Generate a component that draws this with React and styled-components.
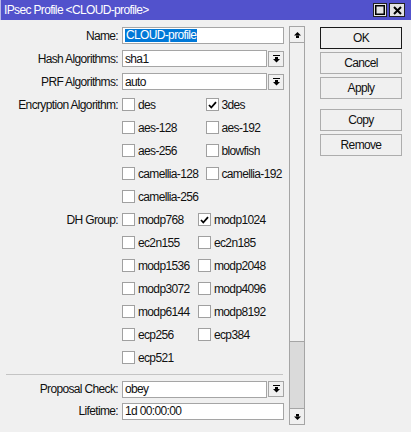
import React from 'react';
import styled, { createGlobalStyle } from 'styled-components';

const GlobalStyle = createGlobalStyle`
    html, body {
        margin: 0;
        padding: 0;
        background: #f0f0f0;
    }

    body {
        font-family: 'Liberation Sans', Arial, sans-serif;
        font-size: 12px;
        letter-spacing: -0.65px;
        color: #111;
    }
`;

const Window = styled.div`
    width: 411px;
    height: 432px;
    background: #f0f0f0;
    display: flex;
    flex-direction: column;
    overflow: hidden;
`;

const TitleBar = styled.div`
    height: 20px;
    background: #5252cc;
    color: #fff;
    display: flex;
    align-items: center;
    justify-content: space-between;
    padding: 0 6px 0 3px;
    border-left: 1px solid #b8b8e8;
    box-sizing: border-box;
`;

const TitleButtons = styled.div`
    display: flex;
    gap: 2px;
`;

const TitleButton = styled.div`
    width: ${p => p.$w || 14}px;
    height: 14px;
    box-sizing: border-box;
    background: #e4e4e4;
    border: 1px solid #222;
    display: flex;
    align-items: center;
    justify-content: center;
`;

const Body = styled.div`
    flex: 1;
    display: flex;
    padding-top: 4px;
`;

const Form = styled.div`
    width: 289px;
    display: flex;
    flex-direction: column;
`;

const Row = styled.div`
    height: ${p => p.$h || 23}px;
    display: flex;
    align-items: center;
`;

const Label = styled.div`
    width: 118px;
    text-align: right;
    padding-right: 4px;
    flex-shrink: 0;
    white-space: nowrap;
`;

const Input = styled.div`
    width: ${p => p.$w}px;
    height: 17px;
    box-sizing: border-box;
    background: #fff;
    border: 1px solid #a5a5a5;
    padding-left: 2px;
    display: flex;
    align-items: center;
    white-space: nowrap;
`;

const Selected = styled.span`
    background: #0078d7;
    color: #fff;
    padding: 0 1px;
    line-height: 13px;
`;

const DropButton = styled.div`
    width: 16px;
    height: 16px;
    margin-left: 1px;
    box-sizing: border-box;
    border: 1px solid #a5a5a5;
    background: #f0f0f0;
    display: flex;
    align-items: center;
    justify-content: center;
`;

const Group = styled.div`
    display: flex;
    flex-direction: column;
`;

const CheckRow = styled.div`
    height: 23px;
    display: flex;
    align-items: center;
`;

const CheckCell = styled.div`
    width: ${p => p.$w}px;
    display: flex;
    align-items: center;
    white-space: nowrap;
`;

const Box = styled.div`
    width: 13px;
    height: 13px;
    box-sizing: border-box;
    background: #fff;
    border: 1px solid #a0a0a0;
    margin-right: 3px;
    display: flex;
    align-items: center;
    justify-content: center;
    flex-shrink: 0;
`;

const Separator = styled.div`
    height: 1px;
    background: #c4c4c4;
    margin: 5px 6px 3px 6px;
`;

const ScrollBar = styled.div`
    width: 16px;
    height: 399px;
    margin-top: 2px;
    box-sizing: border-box;
    display: flex;
    flex-direction: column;
    border: 1px solid #a5a5a5;
    background: #dadada;
`;

const ScrollButton = styled.div`
    height: 15px;
    flex-shrink: 0;
    background: #f0f0f0;
    display: flex;
    align-items: center;
    justify-content: center;
    border-${p => p.$side}: 1px solid #a5a5a5;
`;

const Thumb = styled.div`
    height: 298px;
    background: #f0f0f0;
    border-bottom: 1px solid #a5a5a5;
    flex-shrink: 0;
`;

const Track = styled.div`
    flex: 1;
`;

const Actions = styled.div`
    margin: 3px 0 0 15px;
    width: 82px;
    display: flex;
    flex-direction: column;
    gap: 3px;
`;

const Button = styled.div`
    height: 22px;
    box-sizing: border-box;
    border: 1px solid ${p => (p.$default ? '#1a1a1a' : '#adadad')};
    background: #f0f0f0;
    display: flex;
    align-items: center;
    justify-content: center;
    margin-top: ${p => p.$gap || 0}px;
`;

const DropIcon = () => (
    <svg width="7" height="8" viewBox="0 0 7 8">
        <rect x="0" y="0" width="7" height="1" fill="#000" />
        <rect x="2" y="2" width="3" height="2" fill="#000" />
        <polygon points="0,4 7,4 3.5,7.5" fill="#000" />
    </svg>
);

const Arrow = ({ up }) => (
    <svg width="7" height="6" viewBox="0 0 7 6" style={{ transform: up ? 'none' : 'rotate(180deg)' }}>
        <polygon points="3.5,0 7,3.5 0,3.5" fill="#000" />
        <rect x="2" y="3.5" width="3" height="2.5" fill="#000" />
    </svg>
);

const Check = () => (
    <svg width="9" height="8" viewBox="0 0 9 8">
        <path d="M1 4 L3.3 6.5 L8 1.2" stroke="#000" strokeWidth="1.8" fill="none" />
    </svg>
);

const encryption = [
    [['des', false], ['3des', true]],
    [['aes-128', false], ['aes-192', false]],
    [['aes-256', false], ['blowfish', false]],
    [['camellia-128', false], ['camellia-192', false]],
    [['camellia-256', false]],
];

const dhGroups = [
    [['modp768', false], ['modp1024', true]],
    [['ec2n155', false], ['ec2n185', false]],
    [['modp1536', false], ['modp2048', false]],
    [['modp3072', false], ['modp4096', false]],
    [['modp6144', false], ['modp8192', false]],
    [['ecp256', false], ['ecp384', false]],
    [['ecp521', false]],
];

const CheckGroup = ({ label, rows, col }) => (
    <Group>
        {rows.map((row, i) => (
            <CheckRow key={i}>
                <Label>{i === 0 ? label : ''}</Label>
                {row.map(([name, on]) => (
                    <CheckCell key={name} $w={col}>
                        <Box>{on && <Check />}</Box>
                        {name}
                    </CheckCell>
                ))}
            </CheckRow>
        ))}
    </Group>
);

const App = () => {
    return (
        <Window>
            <GlobalStyle />
            <TitleBar>
                <span>IPsec Profile &lt;CLOUD-profile&gt;</span>
                <TitleButtons>
                    <TitleButton>
                        <svg width="10" height="10" viewBox="0 0 10 10">
                            <rect x="0.75" y="0.75" width="8.5" height="8.5" stroke="#000" strokeWidth="1.5" fill="none" />
                        </svg>
                    </TitleButton>
                    <TitleButton $w={16}>
                        <svg width="9" height="9" viewBox="0 0 9 9">
                            <path d="M1 1 L8 8 M8 1 L1 8" stroke="#000" strokeWidth="2" />
                        </svg>
                    </TitleButton>
                </TitleButtons>
            </TitleBar>
            <Body>
                <Form>
                    <Row>
                        <Label>Name:</Label>
                        <Input $w={162}><Selected>CLOUD-profile</Selected></Input>
                    </Row>
                    <Row>
                        <Label>Hash Algorithms:</Label>
                        <Input $w={145}>sha1</Input>
                        <DropButton><DropIcon /></DropButton>
                    </Row>
                    <Row>
                        <Label>PRF Algorithms:</Label>
                        <Input $w={145}>auto</Input>
                        <DropButton><DropIcon /></DropButton>
                    </Row>
                    <CheckGroup label="Encryption Algorithm:" rows={encryption} col={85} />
                    <CheckGroup label="DH Group:" rows={dhGroups} col={76} />
                    <Separator />
                    <Row $h={22}>
                        <Label>Proposal Check:</Label>
                        <Input $w={145}>obey</Input>
                        <DropButton><DropIcon /></DropButton>
                    </Row>
                    <Row $h={22}>
                        <Label>Lifetime:</Label>
                        <Input $w={162}>1d 00:00:00</Input>
                    </Row>
                </Form>
                <ScrollBar>
                    <ScrollButton $side="bottom"><Arrow up /></ScrollButton>
                    <Thumb />
                    <Track />
                    <ScrollButton $side="top"><Arrow /></ScrollButton>
                </ScrollBar>
                <Actions>
                    <Button $default>OK</Button>
                    <Button>Cancel</Button>
                    <Button>Apply</Button>
                    <Button $gap={7}>Copy</Button>
                    <Button>Remove</Button>
                </Actions>
            </Body>
        </Window>
    );
};

export default App;
